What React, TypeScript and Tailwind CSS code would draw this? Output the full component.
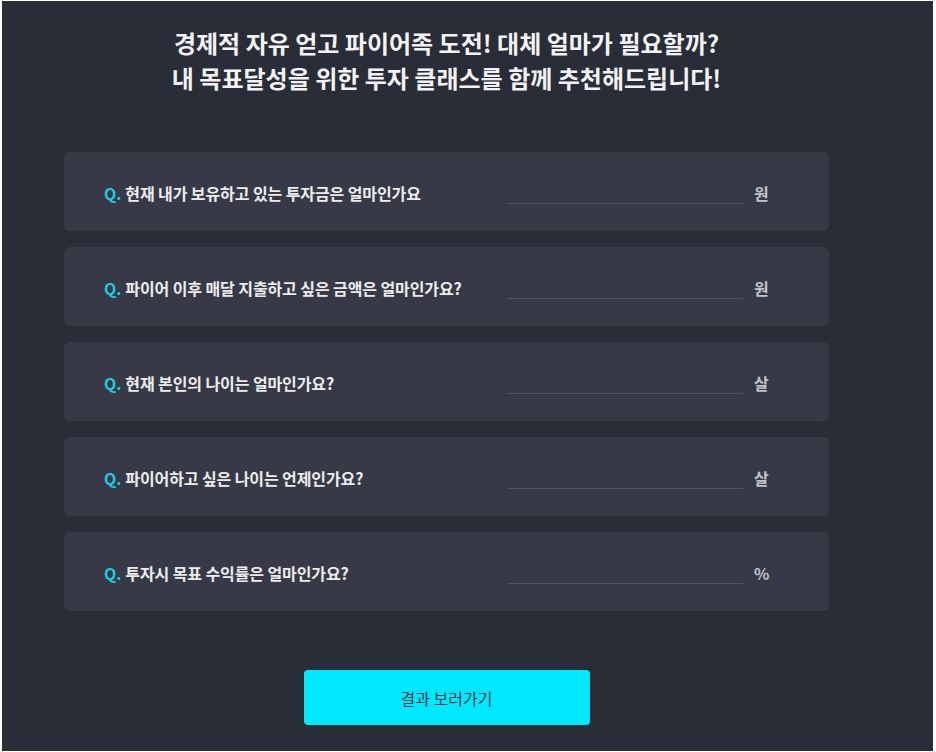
const questions = [
  { q: '현재 내가 보유하고 있는 투자금은 얼마인가요', unit: '원' },
  { q: '파이어 이후 매달 지출하고 싶은 금액은 얼마인가요?', unit: '원' },
  { q: '현재 본인의 나이는 얼마인가요?', unit: '살' },
  { q: '파이어하고 싶은 나이는 언제인가요?', unit: '살' },
  { q: '투자시 목표 수익률은 얼마인가요?', unit: '%' },
];

const font = { fontFamily: '"Noto Sans CJK KR", "Noto Sans", sans-serif' };

export default function App() {
  return (
    <div className="w-[936px] h-[752px] bg-white pt-[1px] pl-[2px] pr-[3px] pb-[1px]" style={font}>
      <div className="h-full bg-[#282d37] pl-[62px]">
        <div className="w-[765px] flex flex-col items-center">
          {/* Title */}
          <div className="w-full pt-[24px] text-center text-[24px] leading-[35px] font-bold text-[#f2f2f2]">
            <p>경제적 자유 얻고 파이어족 도전! 대체 얼마가 필요할까?</p>
            <p>내 목표달성을 위한 투자 클래스를 함께 추천해드립니다!</p>
          </div>

          {/* Questions */}
          <div className="w-full mt-[57px] flex flex-col gap-[16px]">
            {questions.map((item, i) => (
              <div
                key={i}
                className="h-[79px] rounded-md bg-[#373a46] pl-[40px] pt-[3px] flex items-center"
              >
                <div className="flex-1 text-[16px] font-bold text-[#ececec] tracking-[-0.1px]">
                  <span className="text-[#1fcbe3] mr-[4px]">Q.</span>
                  {item.q}
                </div>
                <input
                  className="w-[236px] h-[22px] bg-transparent border-b border-[#50535f] outline-none text-white text-sm"
                  type="text"
                />
                <span className="w-[86px] pl-[11px] text-[16px] font-bold text-[#c2c3c7]">{item.unit}</span>
              </div>
            ))}
          </div>

          {/* Button */}
          <button className="mt-[59px] w-[286px] h-[55px] rounded bg-[#00e8ff] text-[16px] text-[#2b3b45]">
            결과 보러가기
          </button>
        </div>
      </div>
    </div>
  );
}
